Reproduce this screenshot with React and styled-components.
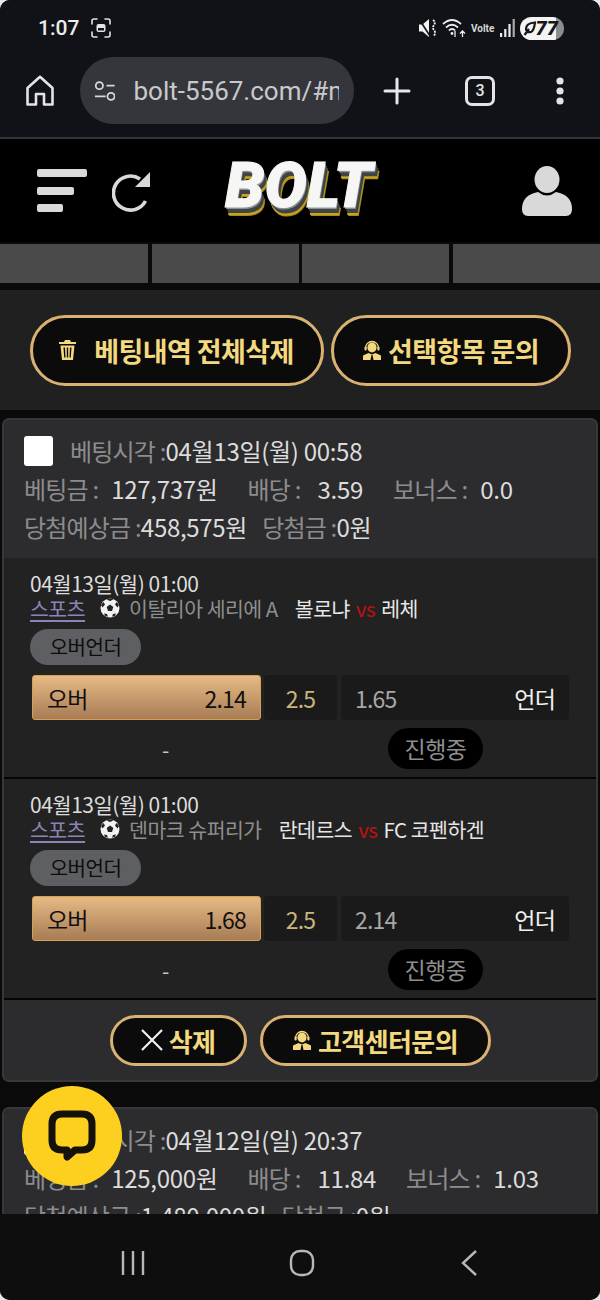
import styled, {createGlobalStyle} from "styled-components";

const GlobalStyle = createGlobalStyle`
    html,body{
        margin: 0;
        padding: 0;
        background: #e8e8e8;
    }
    *{
        box-sizing: border-box;
    }
`;

const firstBets = [
    {
        date: '04월13일(월) 01:00', league: '이탈리아 세리에 A',
        home: '볼로냐', away: '레체', over: '2.14', line: '2.5', under: '1.65',
    },
    {
        date: '04월13일(월) 01:00', league: '덴마크 슈퍼리가',
        home: '란데르스', away: 'FC 코펜하겐', over: '1.68', line: '2.5', under: '2.14',
    },
];

// Icons
const HomeIcon = () => (
    <svg width="28" height="31" viewBox="0 0 28 31" fill="none" stroke="#e4e4e6" strokeWidth="2.6" strokeLinejoin="round">
        <path d="M1.500 13 14 1.800 26.500 13v16.500H18V19h-8v10.500H1.500Z" />
    </svg>
);

const TuneIcon = () => (
    <svg width="24" height="24" viewBox="0 0 24 24" fill="none" stroke="#d8d8dc" strokeWidth="2">
        <circle cx="6" cy="6" r="4" />
        <path d="M14 6h9M1 18h12" />
        <circle cx="19" cy="18" r="4" />
    </svg>
);

const PlusIcon = () => (
    <svg width="28" height="28" viewBox="0 0 28 28" stroke="#e8e8ea" strokeWidth="3" strokeLinecap="round">
        <path d="M14 2v24M2 14h24" />
    </svg>
);

const MoreIcon = () => (
    <svg width="10" height="28" viewBox="0 0 10 28" fill="#e4e4e6">
        <circle cx="5" cy="4" r="3.600" />
        <circle cx="5" cy="14" r="3.600" />
        <circle cx="5" cy="24" r="3.600" />
    </svg>
);

const ScreenshotIcon = () => (
    <svg width="20" height="20" viewBox="0 0 20 20" fill="none" stroke="#e4e4e6" strokeWidth="1.600" strokeLinecap="round">
        <path d="M1 6V3a2 2 0 0 1 2-2h3M14 1h3a2 2 0 0 1 2 2v3M19 14v3a2 2 0 0 1-2 2h-3M6 19H3a2 2 0 0 1-2-2v-3" />
        <rect x="5.500" y="6" width="9" height="8" rx="2" fill="#e4e4e6" stroke="none" />
        <rect x="7" y="10" width="6" height="2.500" fill="#111217" stroke="none" />
    </svg>
);

const MuteIcon = () => (
    <svg width="18" height="20" viewBox="0 0 18 20" fill="#f2f2f2">
        <path d="M0 6.500h3.500L10 1v18l-6.500-5.500H0Z" />
        <path d="M0 1 11 18" stroke="#111217" strokeWidth="1.600" />
        <path d="M14 2q3 2 1 5t0 5-0 6" fill="none" stroke="#f2f2f2" strokeWidth="1.800" strokeDasharray="2 1" />
    </svg>
);

const WifiIcon = () => (
    <svg width="24" height="20" viewBox="0 0 24 20" fill="none" stroke="#ececec" strokeWidth="1.700">
        <path d="M1 6q9-8 18 0M4 9.500q6-5.500 12 0M6.800 12.500q3.200-3 6.400 0" />
        <circle cx="10" cy="15.500" r="1.400" fill="#ececec" stroke="none" />
        <path d="M13 13v6M20.500 19v-6M18 15.500l2.500-2.500 2.500 2.500" strokeWidth="1.300" />
    </svg>
);

const SignalIcon = () => (
    <svg width="15" height="18" viewBox="0 0 15 18" fill="#ececec">
        <rect x="0" y="14" width="2.200" height="4" />
        <rect x="4.200" y="10" width="2.200" height="8" />
        <rect x="8.400" y="5" width="2.200" height="13" />
        <rect x="12.600" y="0" width="2.200" height="18" fill="#aaa" />
    </svg>
);

const LeafIcon = () => (
    <svg width="13" height="15" viewBox="0 0 13 15" fill="none" stroke="#17171a" strokeWidth="2.200">
        <path d="M12 1.500Q3 2 3 8q0 4 5 3 3-1 4-9.500ZM6 8 1.500 14" />
    </svg>
);

const MenuIcon = () => (
    <svg width="50" height="44" viewBox="0 0 50 44" fill="#d9d9d9">
        <rect x="0" y="0" width="50" height="8" rx="2" />
        <rect x="0" y="18" width="37" height="8" rx="2" />
        <rect x="0" y="35" width="26" height="8" rx="2" />
    </svg>
);

const RefreshIcon = () => (
    <svg width="40" height="42" viewBox="0 0 40 42" fill="none">
        <path d="M33.500 31A17 17 0 1 1 28 9" stroke="#d9d9d9" strokeWidth="3.600" />
        <path d="M38 2v15H23Z" fill="#d9d9d9" />
    </svg>
);

const UserIcon = () => (
    <svg width="50" height="50" viewBox="0 0 50 50" fill="#d9d9d9">
        <ellipse cx="25" cy="13.500" rx="12.500" ry="13.500" />
        <path d="M16 26q9 7 18 0 16 3 16 17 0 7-6 7H6q-6 0-6-7 0-14 16-17Z" />
    </svg>
);

const TrashIcon = () => (
    <svg width="17" height="20" viewBox="0 0 17 20" fill="#f3d97f">
        <path d="M6 0h5l1 2h5v2H0V2h5Z" />
        <path d="M1.500 5.500h14L14 20H3Zm3 2 .7 10h1.300l-.5-10Zm3.300 0v10h1.400v-10Zm3.200 0-.5 10h1.300l.7-10Z" fillRule="evenodd" />
    </svg>
);

const AgentIcon = ({size}) => (
    <svg width={size} height={size} viewBox="0 0 20 20" fill="#f3d97f">
        <path d="M3.500 8a6.500 6.500 0 0 1 13 0" fill="none" stroke="#f3d97f" strokeWidth="1.300" />
        <ellipse cx="10" cy="7.500" rx="4.600" ry="5" />
        <rect x="2.500" y="6.500" width="2.200" height="4" rx="1" />
        <rect x="15.300" y="6.500" width="2.200" height="4" rx="1" />
        <path d="M6.500 13 1 15.500V20h7.500L9.500 15h1l1 5H19v-4.500L13.500 13 10 14.500Z" />
    </svg>
);

const CloseIcon = () => (
    <svg width="22" height="22" viewBox="0 0 22 22" stroke="#f2f2f2" strokeWidth="2.200">
        <path d="m1 1 20 20M21 1 1 21" />
    </svg>
);

const BallIcon = () => (
    <svg width="20" height="20" viewBox="0 0 20 20">
        <circle cx="10" cy="10" r="9.500" fill="#f2f2f2" />
        <path d="m10 6.500 3.300 2.400-1.300 4H8l-1.300-4Z" fill="#222" />
        <path d="M6.500 1.500 10 3l3.500-1.500L10 .5ZM1 7l2.500-3L5 6.500 2.500 9.500ZM19 7l-2.500-3L15 6.500l2.500 3ZM4 15.500l3 .5 1 2.800-3-1ZM16 15.500l-3 .5-1 2.800 3-1Z" fill="#222" />
    </svg>
);

const ChatIcon = () => (
    <svg width="48" height="52" viewBox="0 0 48 52" fill="none">
        <path d="M14 4h20q10 0 10 10v16q0 10-10 10h-7l-8 7v-7h-5Q4 40 4 30V14Q4 4 14 4Z" stroke="#14110a" strokeWidth="7" strokeLinejoin="round" />
    </svg>
);

const NavRecents = () => (
    <svg width="26" height="26" viewBox="0 0 26 26" stroke="#b8b8b8" strokeWidth="2.400">
        <path d="M3 1v24M13 1v24M23 1v24" />
    </svg>
);

const NavHome = () => (
    <svg width="26" height="28" viewBox="0 0 26 28" fill="none" stroke="#b8b8b8" strokeWidth="2.400">
        <rect x="2" y="2" width="22" height="24" rx="9" />
    </svg>
);

const NavBack = () => (
    <svg width="20" height="28" viewBox="0 0 20 28" fill="none" stroke="#b8b8b8" strokeWidth="2.400">
        <path d="M18 2 5 14l13 12" />
    </svg>
);

// Parts
const Summary = ({time, amount, odds, bonus, expected, won}) => (
    <CardHead>
        <InfoRow>
            <CheckBox />
            <Label>베팅시각 :</Label><Value>{time}</Value>
        </InfoRow>
        <InfoRow>
            <Label>베팅금 :</Label><Value $pad={13}>{amount}</Value>
            <Label $gap>배당 :</Label><Value $pad={17}>{odds}</Value>
            <Label $gap>보너스 :</Label><Value $pad={13}>{bonus}</Value>
        </InfoRow>
        <InfoRow>
            <Label>당첨예상금 :</Label><Value>{expected}</Value>
            <Label $near>당첨금 :</Label><Value>{won}</Value>
        </InfoRow>
    </CardHead>
);

const BetRow = ({bet}) => (
    <Bet>
        <BetDate>{bet.date}</BetDate>
        <MatchLine>
            <Sport>스포츠</Sport>
            <BallIcon />
            <League>{bet.league}</League>
            <Team>{bet.home}</Team>
            <Versus>vs</Versus>
            <Team>{bet.away}</Team>
        </MatchLine>
        <Market>오버언더</Market>
        <OddsRow>
            <OverCell><span>오버</span><span>{bet.over}</span></OverCell>
            <LineCell>{bet.line}</LineCell>
            <UnderCell><UnderOdd>{bet.under}</UnderOdd><span>언더</span></UnderCell>
        </OddsRow>
        <ResultRow>
            <Dash>-</Dash>
            <Status>진행중</Status>
        </ResultRow>
    </Bet>
);

const App = () => {
    return(
        <Screen>
            <GlobalStyle />
            <BrowserChrome>
                <StatusBar>
                    <Clock>1:07</Clock>
                    <ScreenshotIcon />
                    <StatusRight>
                        <MuteIcon />
                        <WifiIcon />
                        <Volte>Volte</Volte>
                        <SignalIcon />
                        <Battery><LeafIcon />77</Battery>
                    </StatusRight>
                </StatusBar>
                <Toolbar>
                    <HomeIcon />
                    <UrlPill>
                        <TuneIcon />
                        <UrlText>bolt-5567.com/#my</UrlText>
                    </UrlPill>
                    <PlusIcon />
                    <TabCount>3</TabCount>
                    <MoreIcon />
                </Toolbar>
            </BrowserChrome>
            <SiteHeader>
                <HeaderLeft>
                    <MenuIcon />
                    <RefreshIcon />
                </HeaderLeft>
                <Logo>BOLT</Logo>
                <UserIcon />
            </SiteHeader>
            <Content>
                <TabRow>
                    <TabCell /><TabCell /><TabCell /><TabCell />
                </TabRow>
                <ActionPanel>
                    <GoldButton $w={294} $h={71} $size={27}><TrashIcon /><ButtonText $indent>베팅내역 전체삭제</ButtonText></GoldButton>
                    <GoldButton $w={240} $h={71} $size={27}><AgentIcon size={20} /><ButtonText>선택항목 문의</ButtonText></GoldButton>
                </ActionPanel>
                <Card>
                    <Summary
                        time="04월13일(월) 00:58" amount="127,737원" odds="3.59" bonus="0.0"
                        expected="458,575원" won="0원" />
                    {firstBets.map((bet) => <BetRow key={bet.home} bet={bet} />)}
                    <CardFoot>
                        <GoldButton $w={137} $h={51} $size={26}><CloseIcon /><ButtonText>삭제</ButtonText></GoldButton>
                        <GoldButton $w={231} $h={51} $size={26}><AgentIcon size={20} /><ButtonText>고객센터문의</ButtonText></GoldButton>
                    </CardFoot>
                </Card>
                <Card $next>
                    <Summary
                        time="04월12일(일) 20:37" amount="125,000원" odds="11.84" bonus="1.03"
                        expected="1,480,000원" won="0원" />
                </Card>
            </Content>
            <NavBar>
                <NavRecents />
                <NavHome />
                <NavBack />
            </NavBar>
            <ChatButton><ChatIcon /></ChatButton>
        </Screen>
    );
}

const KR = `"Noto Sans CJK KR", "Roboto", sans-serif`;

const Screen = styled.div`
    position: relative;
    width: 600px;
    height: 1300px;
    display: flex;
    flex-direction: column;
    overflow: hidden;
    border-radius: 10px;
    background: #0a0a0a;
    font-family: ${KR};
`;

const BrowserChrome = styled.div`
    height: 139px;
    flex: none;
    background: #111217;
    border-bottom: 2px solid #33343a;
`;

const StatusBar = styled.div`
    height: 56px;
    padding: 0 36px 0 38px;
    display: flex;
    align-items: center;
    gap: 12px;
`;

const Clock = styled.span`
    font-family: "Roboto", sans-serif;
    font-size: 21px;
    font-weight: 500;
    color: #ececec;
`;

const StatusRight = styled.div`
    margin-left: auto;
    display: flex;
    align-items: center;
    gap: 5px;
`;

const Volte = styled.span`
    width: 24px;
    font-family: "Roboto", sans-serif;
    font-size: 10px;
    font-weight: 700;
    color: #d8d8d8;
`;

const Battery = styled.span`
    width: 44px;
    height: 23px;
    padding-right: 6px;
    display: flex;
    align-items: center;
    justify-content: flex-end;
    border-radius: 12px;
    background: linear-gradient(90deg, #f4f4f4 82%, #8d8d8d 82%);
    color: #17171a;
    font-family: "Roboto", sans-serif;
    font-size: 20px;
    font-weight: 900;
    font-style: italic;
`;

const Toolbar = styled.div`
    height: 69px;
    padding: 0 26px 0 26px;
    display: flex;
    align-items: center;
`;

const UrlPill = styled.div`
    width: 274px;
    height: 67px;
    margin: 0 29px 0 26px;
    padding: 0 15px 0 14px;
    display: flex;
    align-items: center;
    gap: 18px;
    border-radius: 34px;
    background: #35363b;
    overflow: hidden;
`;

const UrlText = styled.span`
    font-family: "Roboto", sans-serif;
    font-size: 26px;
    color: #c9c9cd;
    white-space: nowrap;
    overflow: hidden;
`;

const TabCount = styled.span`
    width: 30px;
    height: 30px;
    margin: 0 60px 0 54px;
    flex: none;
    border: 3px solid #e4e4e6;
    border-radius: 7px;
    color: #e4e4e6;
    font-family: "Roboto", sans-serif;
    font-size: 16px;
    font-weight: 500;
    line-height: 24px;
    text-align: center;
`;

const SiteHeader = styled.div`
    height: 103px;
    flex: none;
    padding: 0 28px 0 37px;
    display: flex;
    align-items: center;
    background: #000;
`;

const HeaderLeft = styled.div`
    display: flex;
    align-items: center;
    gap: 25px;
`;

const Logo = styled.div`
    margin: -11px auto 0 73px;
    font-family: "Roboto", sans-serif;
    font-size: 63px;
    font-weight: 900;
    font-style: italic;
    line-height: 1;
    letter-spacing: 0;
    color: #f6f6f4;
    -webkit-text-stroke: 1px #f6f6f4;
    text-shadow: 1px 2px 0 #8c9092, 2px 4px 0 #3f4446, 3px 6px 0 #3f4446, 3px 8px 0 #c9a51f, 4px 9px 0 #a98a16;
`;

const Content = styled.div`
    flex: 1;
    min-height: 0;
    overflow: hidden;
    padding-top: 2px;
`;

const TabRow = styled.div`
    height: 39px;
    display: grid;
    grid-template-columns: 148px 147px 147px 1fr;
    gap: 3.500px;
`;

const TabCell = styled.div`
    background: #4a4a4a;
`;

const ActionPanel = styled.div`
    height: 120px;
    margin-top: 7px;
    display: flex;
    align-items: center;
    justify-content: center;
    gap: 7px;
    background: #202020;
`;

const GoldButton = styled.div`
    width: ${(props) => props.$w}px;
    height: ${(props) => props.$h}px;
    flex: none;
    display: flex;
    align-items: center;
    justify-content: center;
    gap: 6px;
    border: 3px solid #d9b271;
    border-radius: 36px;
    background: #0b0b0b;
    color: #f3d97f;
    font-size: ${(props) => props.$size}px;
    font-weight: 700;
`;

const ButtonText = styled.span`
    margin-left: ${(props) => (props.$indent ? '12px' : '0')};
    letter-spacing: -0.600px;
    white-space: nowrap;
`;

const Card = styled.div`
    margin: ${(props) => (props.$next ? '25px 2px 0' : '8px 2px 0')};
    border: 2px solid #37383a;
    border-radius: 7px;
    background: #2a2b2d;
    overflow: hidden;
`;

const CardHead = styled.div`
    height: 138px;
    padding: 12px 20px 0;
    display: flex;
    flex-direction: column;
    background: #2c2c2e;
`;

const InfoRow = styled.div`
    height: 38px;
    flex: none;
    display: flex;
    align-items: center;
    font-size: 24px;
    line-height: 1;
    white-space: nowrap;
`;

const CheckBox = styled.div`
    width: 29px;
    height: 30px;
    margin-right: 17px;
    border-radius: 3px;
    background: #fff;
`;

const Label = styled.span`
    color: #8c8c8e;
    letter-spacing: -0.800px;
    margin-left: ${(props) => (props.$gap ? '30px' : props.$near ? '15px' : '0')};
`;

const Value = styled.span`
    color: #dcdcdc;
    letter-spacing: -0.300px;
    margin-left: ${(props) => props.$pad || 0}px;
`;

const Bet = styled.div`
    height: 221px;
    padding: 12px 26px 0;
    background: #222;
    border-bottom: 2px solid #050505;
`;

const BetDate = styled.div`
    height: 27px;
    font-size: 21px;
    line-height: 27px;
    letter-spacing: -0.500px;
    color: #dcdcdc;
`;

const MatchLine = styled.div`
    height: 22px;
    display: flex;
    align-items: center;
    font-size: 20.500px;
    line-height: 1;
    letter-spacing: -0.500px;
    white-space: nowrap;
`;

const Sport = styled.span`
    margin-right: 15px;
    color: #8a85b5;
    text-decoration: underline;
    text-underline-offset: 3px;
`;

const League = styled.span`
    margin: 0 17px 0 9px;
    color: #8f8f8f;
`;

const Team = styled.span`
    color: #e6e6e6;
`;

const Versus = styled.span`
    margin: 0 6px;
    color: #c01010;
`;

const Market = styled.div`
    width: 111px;
    height: 36px;
    margin-top: 10px;
    border-radius: 18px;
    background: #5e5f62;
    color: #0c0c0c;
    font-size: 20px;
    line-height: 36px;
    text-align: center;
    letter-spacing: -0.500px;
`;

const OddsRow = styled.div`
    height: 45px;
    margin: 10px 0 0 2px;
    display: flex;
    gap: 3px;
    font-size: 23px;
    letter-spacing: -0.800px;
`;

const OverCell = styled.div`
    width: 229px;
    padding: 0 14px;
    display: flex;
    align-items: center;
    justify-content: space-between;
    border: 1px solid #d89f4e;
    border-radius: 3px;
    background: linear-gradient(180deg, #e6ba84, #a87c55);
    color: #111;
`;

const LineCell = styled.div`
    width: 73px;
    display: flex;
    align-items: center;
    justify-content: center;
    border-radius: 4px;
    background: #1a1a1b;
    color: #c9b67c;
`;

const UnderCell = styled.div`
    width: 228px;
    margin-left: 1px;
    padding: 0 14px;
    display: flex;
    align-items: center;
    justify-content: space-between;
    border-radius: 4px;
    background: #1a1a1b;
    color: #f0f0f0;
`;

const UnderOdd = styled.span`
    color: #a8a8a8;
`;

const ResultRow = styled.div`
    height: 41px;
    margin-top: 8px;
    display: flex;
    align-items: center;
`;

const Dash = styled.span`
    width: 358px;
    padding-left: 132px;
    color: #c8c8c8;
    font-size: 21px;
`;

const Status = styled.span`
    width: 95px;
    height: 41px;
    border-radius: 21px;
    background: #000;
    color: #8e8e8e;
    font-size: 23px;
    line-height: 40px;
    text-align: center;
    letter-spacing: -0.500px;
`;

const CardFoot = styled.div`
    height: 80px;
    display: flex;
    align-items: center;
    justify-content: center;
    gap: 13px;
    background: #2c2c2e;
`;

const NavBar = styled.div`
    height: 86px;
    flex: none;
    padding: 12px 0 0 120px;
    display: flex;
    align-items: center;
    gap: 143px;
    background: #0e0e0e;
`;

const ChatButton = styled.div`
    position: absolute;
    left: 22px;
    top: 1086px;
    width: 100px;
    height: 100px;
    display: flex;
    align-items: center;
    justify-content: center;
    border-radius: 50%;
    background: #fdd01f;
`;

export default App;
